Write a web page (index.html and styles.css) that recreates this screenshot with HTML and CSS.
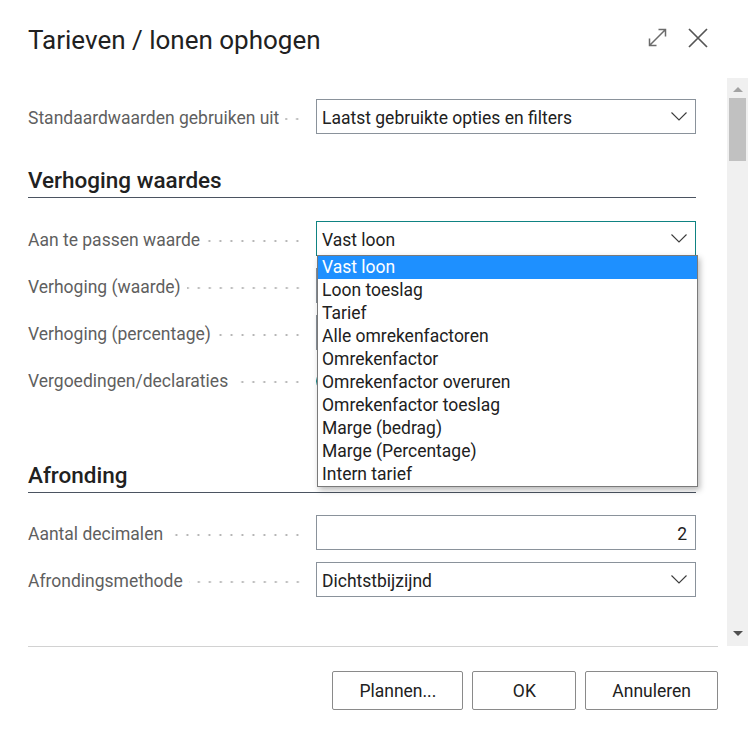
FILE: index.html
```html
<!DOCTYPE html>
<html lang="nl">
<head>
<meta charset="utf-8">
<title>Tarieven / lonen ophogen</title>
<link rel="stylesheet" href="styles.css">
</head>
<body>
<div class="dialog">
  <header class="header">
    <h1 class="title">Tarieven / lonen ophogen</h1>
    <div class="header-icons">
      <svg class="icon" width="19" height="19" viewBox="0 0 19 19" aria-hidden="true">
        <path d="M1.5 17.5 L17.5 1.5 M10.5 1.5 H17.5 V8.5 M1.5 10.5 V17.5 H8.5" fill="none" stroke="#6b6b6b" stroke-width="1.5"/>
      </svg>
      <svg class="icon" width="20" height="20" viewBox="0 0 20 20" aria-hidden="true">
        <path d="M1 1 L19 19 M19 1 L1 19" fill="none" stroke="#555" stroke-width="1.7"/>
      </svg>
    </div>
  </header>

  <div class="body">
    <div class="content">
      <div class="row">
        <div class="label"><span>Standaardwaarden gebruiken uit</span><i class="leader"></i></div>
        <div class="field select"><span>Laatst gebruikte opties en filters</span><svg class="chev" width="16" height="9" viewBox="0 0 16 9"><path d="M0.5 0.5 L8 8 L15.5 0.5" fill="none" stroke="#3c3c3c" stroke-width="1.1"/></svg></div>
      </div>

      <h2 class="section section-first">Verhoging waardes</h2>

      <div class="row">
        <div class="label"><span>Aan te passen waarde</span><i class="leader"></i></div>
        <div class="field select focused"><span>Vast loon</span><svg class="chev" width="16" height="9" viewBox="0 0 16 9"><path d="M0.5 0.5 L8 8 L15.5 0.5" fill="none" stroke="#3c3c3c" stroke-width="1.1"/></svg>
          <ul class="dropdown">
            <li class="active">Vast loon</li>
            <li>Loon toeslag</li>
            <li>Tarief</li>
            <li>Alle omrekenfactoren</li>
            <li>Omrekenfactor</li>
            <li>Omrekenfactor overuren</li>
            <li>Omrekenfactor toeslag</li>
            <li>Marge (bedrag)</li>
            <li>Marge (Percentage)</li>
            <li>Intern tarief</li>
          </ul>
        </div>
      </div>
      <div class="row">
        <div class="label"><span>Verhoging (waarde)</span><i class="leader"></i></div>
        <div class="field num"><span>0</span></div>
      </div>
      <div class="row">
        <div class="label"><span>Verhoging (percentage)</span><i class="leader"></i></div>
        <div class="field num"><span>0</span></div>
      </div>
      <div class="row">
        <div class="label"><span>Vergoedingen/declaraties</span><i class="leader"></i></div>
        <div class="toggle-wrap"><span class="toggle"></span></div>
      </div>

      <h2 class="section section-second">Afronding</h2>

      <div class="row">
        <div class="label"><span>Aantal decimalen</span><i class="leader"></i></div>
        <div class="field num"><span>2</span></div>
      </div>
      <div class="row">
        <div class="label"><span>Afrondingsmethode</span><i class="leader"></i></div>
        <div class="field select"><span>Dichtstbijzijnd</span><svg class="chev" width="16" height="9" viewBox="0 0 16 9"><path d="M0.5 0.5 L8 8 L15.5 0.5" fill="none" stroke="#3c3c3c" stroke-width="1.1"/></svg></div>
      </div>
    </div>

    <div class="scrollbar">
      <span class="arrow-up"></span>
      <span class="thumb"></span>
      <span class="track"></span>
      <span class="arrow-down"></span>
    </div>
  </div>

  <footer class="footer">
    <button class="btn">Plannen...</button>
    <button class="btn">OK</button>
    <button class="btn">Annuleren</button>
  </footer>
</div>
</body>
</html>
```

FILE: styles.css
```css
* { box-sizing: border-box; }

html, body {
  margin: 0;
  padding: 0;
  background: #ffffff;
}

body {
  width: 748px;
  height: 741px;
  overflow: hidden;
  font-family: Roboto, "Noto Sans", sans-serif;
  color: #212121;
}

.dialog {
  display: flex;
  flex-direction: column;
  height: 741px;
}

.header {
  height: 78px;
  display: flex;
  align-items: flex-start;
  justify-content: space-between;
  padding: 0 40px 0 28px;
}

.title {
  margin: 0;
  padding-top: 24px;
  font-size: 26px;
  font-weight: 400;
  line-height: 32px;
  color: #212121;
}

.header-icons {
  display: flex;
  gap: 21px;
  padding-top: 28px;
}

.icon { display: block; }

.body {
  display: flex;
  height: 568px;
}

.content {
  flex: 1;
  padding: 21px 30px 0 28px;
}

.row {
  display: flex;
  align-items: center;
  height: 35px;
  margin-bottom: 12px;
}

.label {
  width: 288px;
  display: flex;
  align-items: center;
  padding-top: 3px;
  font-size: 17.5px;
  color: #5f5f5f;
  white-space: nowrap;
}

.leader {
  flex: 1;
  height: 4px;
  margin: 1px 13px 0 6px;
  background-image: radial-gradient(circle, #b3b3b3 0.9px, transparent 1.3px);
  background-size: 11px 4px;
  background-repeat: repeat-x;
  background-position: right center;
}

.field {
  position: relative;
  width: 380px;
  height: 35px;
  border: 1px solid #8a929b;
  background: #fff;
  display: flex;
  align-items: center;
  padding: 0 8px 0 5px;
  font-size: 17.5px;
  color: #212121;
}

.field > span {
  flex: 1;
  padding-top: 3px;
}

.field.focused { border-color: #0f8382; }

.field.num > span { text-align: right; }

.chev { display: block; flex: none; }

.toggle-wrap {
  height: 35px;
  display: flex;
  align-items: center;
  padding-top: 2px;
}

.toggle {
  display: block;
  width: 44px;
  height: 20px;
  border-radius: 10px;
  background: #0f8382;
}

.section {
  margin: 0;
  font-size: 22.5px;
  font-weight: 500;
  line-height: 28px;
  padding-bottom: 3px;
  border-bottom: 1px solid #4b5461;
  color: #212121;
  width: 668px;
}

.section-first { margin-top: 32px; margin-bottom: 23px; }
.section-second { margin-top: 64px; margin-bottom: 22px; }

.dropdown {
  position: absolute;
  left: 0;
  top: 33px;
  width: 381px;
  margin: 0;
  padding: 0;
  list-style: none;
  background: #fff;
  border: 1px solid #7a7a7a;
  box-shadow: 2px 3px 6px rgba(0, 0, 0, 0.28);
  z-index: 5;
}

.dropdown li {
  height: 23px;
  line-height: 23px;
  padding-left: 4px;
  font-size: 17.5px;
  color: #212121;
  white-space: nowrap;
}

.dropdown li.active {
  background: #1e90ff;
  color: #fff;
}

.scrollbar {
  width: 21px;
  background: #f0f0f0;
  display: flex;
  flex-direction: column;
  align-items: center;
}

.arrow-up {
  width: 0;
  height: 0;
  margin-top: 9px;
  border-left: 5px solid transparent;
  border-right: 5px solid transparent;
  border-bottom: 5px solid #a3a3a3;
}

.thumb {
  width: 17px;
  height: 63px;
  margin-top: 6px;
  background: #c1c1c1;
}

.track { flex: 1; }

.arrow-down {
  width: 0;
  height: 0;
  margin-bottom: 10px;
  border-left: 5px solid transparent;
  border-right: 5px solid transparent;
  border-top: 5px solid #505050;
}

.footer {
  margin: 0 30px 0 28px;
  border-top: 1px solid #d2d2d2;
  padding-top: 24px;
  display: flex;
  justify-content: flex-end;
  gap: 9px;
}

.btn {
  height: 39px;
  min-width: 104px;
  padding: 0 26px;
  border: 1px solid #8a8a8a;
  border-radius: 2px;
  background: #fff;
  font-family: Roboto, "Noto Sans", sans-serif;
  font-size: 17.5px;
  color: #212121;
}
```
